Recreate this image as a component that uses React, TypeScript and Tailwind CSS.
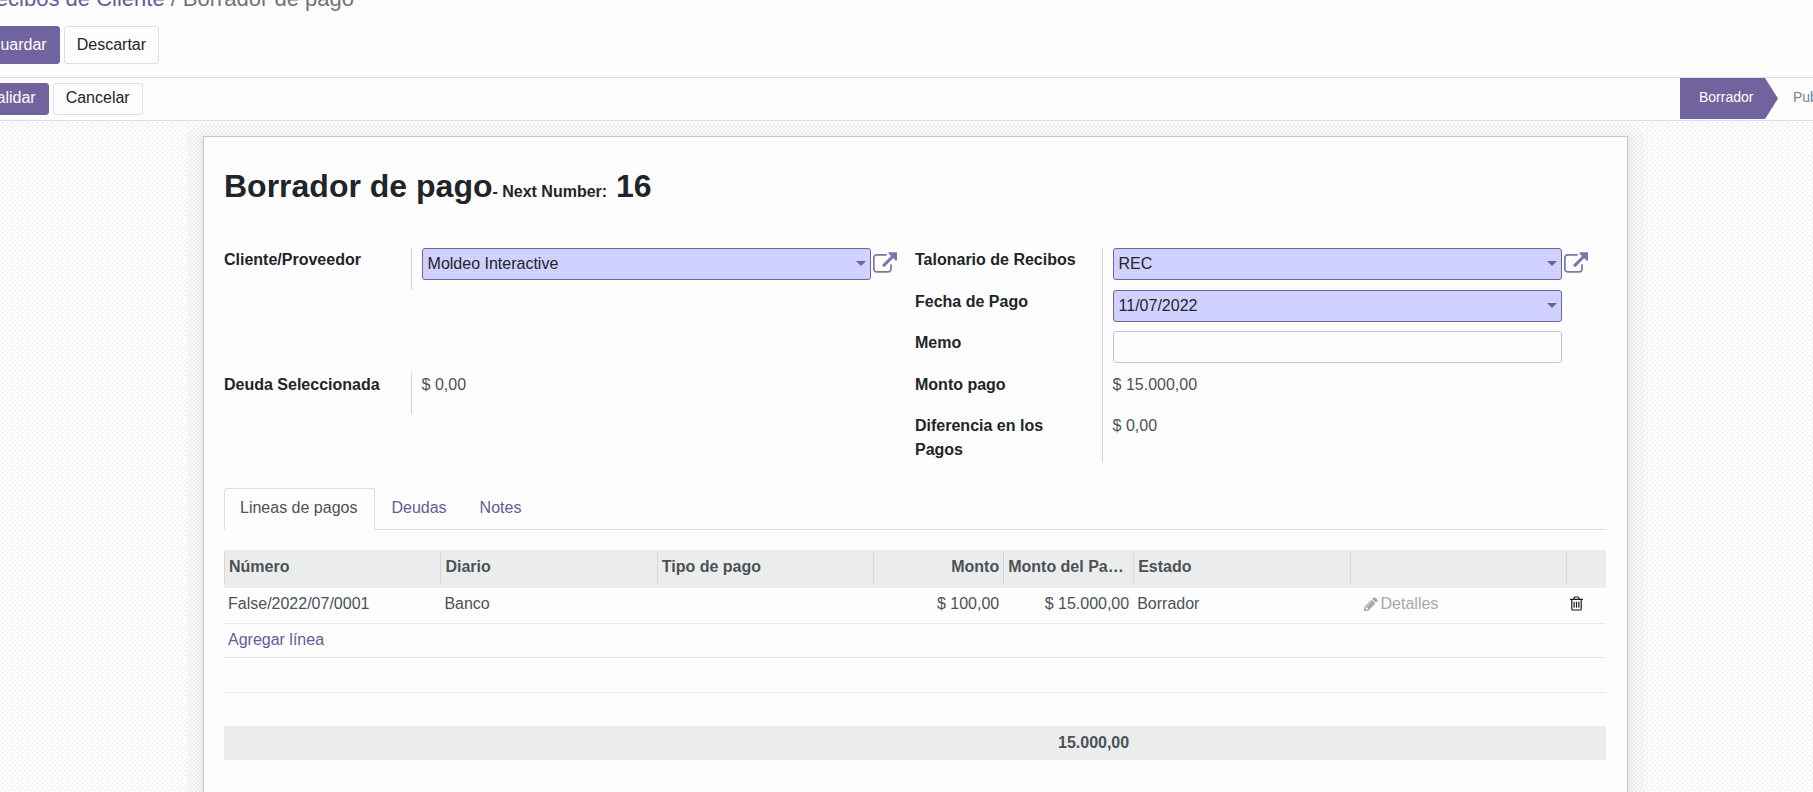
import { ReactNode } from "react";

const tabs = ["Lineas de pagos", "Deudas", "Notes"];

const ExternalLinkIcon = () => (
  <svg viewBox="0 0 1792 1536" className="h-[21px] w-6 fill-[#7c76ab]" aria-hidden="true">
    <path d="M1408 800v320q0 119-84.5 203.5t-203.5 84.5h-832q-119 0-203.5-84.5t-84.5-203.5v-832q0-119 84.5-203.5t203.5-84.5h704q14 0 23 9t9 23v64q0 14-9 23t-23 9h-704q-66 0-113 47t-47 113v832q0 66 47 113t113 47h832q66 0 113-47t47-113v-320q0-14 9-23t23-9h64q14 0 23 9t9 23z" transform="translate(0 128)" />
    <path d="M1792 64v512q0 26-19 45t-45 19-45-19l-176-176-652 652q-10 10-23 10t-23-10l-114-114q-10-10-10-23t10-23l652-652-176-176q-19-19-19-45t19-45 45-19h512q26 0 45 19t19 45z" />
  </svg>
);

const PencilIcon = () => (
  <svg viewBox="128 128 1536 1536" className="size-[14px] fill-current" aria-hidden="true">
    <path d="M491 1536l91-91-235-235-91 91v107h128v128h107zm523-928q0-22-22-22-10 0-17 7l-542 542q-7 7-7 17 0 22 22 22 10 0 17-7l542-542q7-7 7-17zm-54-192l416 416-832 832h-416v-416zm683 96q0 53-37 90l-166 166-416-416 166-165q36-38 90-38 53 0 91 38l235 234q37 39 37 91z" />
  </svg>
);

const TrashIcon = () => (
  <svg viewBox="192 128 1408 1536" className="h-[15px] w-[13px] fill-current" aria-hidden="true">
    <path d="M704 736v576q0 14-9 23t-23 9h-64q-14 0-23-9t-9-23v-576q0-14 9-23t23-9h64q14 0 23 9t9 23zm256 0v576q0 14-9 23t-23 9h-64q-14 0-23-9t-9-23v-576q0-14 9-23t23-9h64q14 0 23 9t9 23zm256 0v576q0 14-9 23t-23 9h-64q-14 0-23-9t-9-23v-576q0-14 9-23t23-9h64q14 0 23 9t9 23zm128 724v-948h-896v948q0 22 7 40.5t14.5 27 10.5 8.5h832q3 0 10.5-8.5t14.5-27 7-40.5zm-672-1076h448l-48-117q-7-9-17-11h-317q-10 2-17 11zm928 32v64q0 14-9 23t-23 9h-96v948q0 83-47 143.5t-113 60.5h-832q-66 0-113-58.5t-47-141.5v-952h-96q-14 0-23-9t-9-23v-64q0-14 9-23t23-9h309l70-167q15-37 54-63t79-26h320q40 0 79 26t54 63l70 167h309q14 0 23 9t9 23z" />
  </svg>
);

const Caret = () => (
  <svg viewBox="0 0 10 5" className="pointer-events-none absolute right-[5px] top-[13px] h-[5px] w-[10px] fill-[#71639e]" aria-hidden="true">
    <path d="M0 0h10L5 5z" />
  </svg>
);

const Label = ({ htmlFor, children, className = "" }: { htmlFor: string; children: ReactNode; className?: string }) => (
  <label htmlFor={htmlFor} className={`pr-4 font-bold ${className}`}>
    {children}
  </label>
);

const Value = ({ children, className = "" }: { children: ReactNode; className?: string }) => (
  <div className={`flex items-start gap-[2px] border-l border-[#d5d5da] pl-[10px] text-[#4c5158] ${className}`}>{children}</div>
);

const SelectField = ({ id, value }: { id: string; value: string }) => (
  <>
    <div className="relative w-[91%]">
      <select
        id={id}
        className="block h-8 w-full appearance-none rounded-[3px] border border-[#71639e] bg-[#d1d1ff] px-[5px] text-[#212529] outline-none"
      >
        <option>{value}</option>
      </select>
      <Caret />
    </div>
    <button type="button" aria-label="Enlace externo" className="mt-1">
      <ExternalLinkIcon />
    </button>
  </>
);

const HeadCell = ({ children, right }: { children?: ReactNode; right?: boolean }) => (
  <th className="px-0 pb-[3px] pt-px font-bold">
    <div className={`h-[34px] truncate border-l border-[#d3d5d6] px-1 py-1 ${right ? "text-right" : "text-left"}`}>{children}</div>
  </th>
);

const App = () => {
  return (
    <div className="flex h-screen flex-col overflow-hidden bg-[#fdfdfd] font-['Liberation_Sans',Arial,sans-serif] text-base text-[#212529]">
      {/* Control panel */}
      <header className="shrink-0 border-b border-[#dcdce2] pb-[13px]">
        <nav className="-ml-5 -mt-[17px] whitespace-nowrap text-[22px] leading-8 text-[#6c757d]">
          <a href="#" className="text-[#665a97]">Recibos de Cliente</a>
          <span className="px-[6px]">/</span>
          <span>Borrador de pago</span>
        </nav>
        <div className="-ml-[25px] mt-[11px] flex gap-1">
          <button type="button" className="h-[38px] rounded-[3px] border border-[#71639e] bg-[#71639e] px-3 text-white">Guardar</button>
          <button type="button" className="h-[38px] rounded-[3px] border border-[#dcdfe3] px-3">Descartar</button>
        </div>
      </header>

      {/* Status bar */}
      <div className="flex h-[43px] shrink-0 items-start border-b border-[#dcdce2]">
        <div className="-ml-[26px] mt-[5px] flex gap-1">
          <button type="button" className="h-8 rounded-[3px] border border-[#71639e] bg-[#71639e] px-3 pb-[2px] text-white">Validar</button>
          <button type="button" className="h-8 rounded-[3px] border border-[#dcdfe3] px-3 pb-[2px]">Cancelar</button>
        </div>
        <div className="ml-auto flex w-[133px] items-start overflow-hidden text-sm leading-[38px]">
          <button type="button" className="h-[41px] w-[98px] shrink-0 bg-[#71639e] pb-[3px] pl-[19px] text-left text-white [clip-path:polygon(0_0,85px_0,100%_50%,85px_100%,0_100%)]">
            Borrador
          </button>
          <button type="button" className="pl-[15px] text-[#7c8186]">Publicado</button>
        </div>
      </div>

      {/* Form */}
      <main className="flex min-h-0 flex-1 flex-col bg-[conic-gradient(at_1px_2px,transparent_75%,#e9ebeb_0),conic-gradient(at_2px_1px,transparent_75%,#e9ebeb_0)] bg-[length:5px_5px] bg-[position:2px_1px,4px_4px] pt-[3px]">
        <div className="ml-[187px] mr-[169px] flex-1 rounded-t-2xl bg-[repeating-conic-gradient(#ebedec_0_25%,#fdfdfd_0_50%)] bg-[length:4px_4px] px-4 pt-3">
          <div className="h-full border border-b-0 border-[#c6c6d0] bg-[#fdfdfd] pl-5 pr-[21px] pt-[29px] shadow-[0_4px_4px_4px_#e9ebeb]">
            <h1 className="text-[32px] font-bold leading-10">
              Borrador de pago<span className="text-base">- Next Number:</span> 16
            </h1>

            <div className="mt-[42px] grid grid-cols-2">
              <div className="grid grid-cols-[27%_1fr] grid-rows-[42px_41px_42px_41px_auto]">
                <Label htmlFor="partner">Cliente/Proveedor</Label>
                <Value>
                  <SelectField id="partner" value="Moldeo Interactive" />
                </Value>
                <Label htmlFor="debt" className="row-start-4">Deuda Seleccionada</Label>
                <Value className="row-start-4">
                  <output id="debt">$ 0,00</output>
                </Value>
              </div>

              <div className="grid grid-cols-[27%_1fr] grid-rows-[42px_41px_42px_41px_auto]">
                <Label htmlFor="book">Talonario de Recibos</Label>
                <Value>
                  <SelectField id="book" value="REC" />
                </Value>
                <Label htmlFor="date">Fecha de Pago</Label>
                <Value>
                  <div className="relative w-[91%]">
                    <input
                      id="date"
                      type="text"
                      defaultValue="11/07/2022"
                      className="block h-8 w-full rounded-[3px] border border-[#71639e] bg-[#d1d1ff] px-[5px] text-[#212529] outline-none"
                    />
                    <Caret />
                  </div>
                </Value>
                <Label htmlFor="memo">Memo</Label>
                <Value>
                  <input id="memo" type="text" className="block h-8 w-[91%] rounded-[3px] border border-[#c6c6d0] px-[5px] outline-none" />
                </Value>
                <Label htmlFor="amount">Monto pago</Label>
                <Value>
                  <output id="amount">$ 15.000,00</output>
                </Value>
                <Label htmlFor="diff">Diferencia en los Pagos</Label>
                <Value>
                  <output id="diff">$ 0,00</output>
                </Value>
              </div>
            </div>

            {/* Tabs */}
            <div role="tablist" className="mt-[26px] flex border-b border-[#dcdce2]">
              {tabs.map((tab, i) => (
                <button
                  key={tab}
                  type="button"
                  role="tab"
                  aria-selected={i === 0}
                  className={
                    i === 0
                      ? "-mb-px rounded-t-[3px] border border-b-0 border-[#dcdce2] bg-[#fdfdfd] pb-[10px] pl-[15px] pr-[17px] pt-[7px] text-[#4c5158]"
                      : "pb-[9px] pl-4 pr-[17px] pt-2 text-[#665a97]"
                  }
                >
                  {tab}
                </button>
              ))}
            </div>

            <table className="mt-5 w-full table-fixed border-collapse text-[#4c5158]">
              <colgroup>
                <col />
                <col />
                <col />
                <col className="w-[130px]" />
                <col className="w-[130px]" />
                <col />
                <col />
                <col className="w-10" />
              </colgroup>
              <thead className="bg-[#ebedec]">
                <tr>
                  <HeadCell>Número</HeadCell>
                  <HeadCell>Diario</HeadCell>
                  <HeadCell>Tipo de pago</HeadCell>
                  <HeadCell right>Monto</HeadCell>
                  <HeadCell>Monto del Pa…</HeadCell>
                  <HeadCell>Estado</HeadCell>
                  <HeadCell />
                  <HeadCell />
                </tr>
              </thead>
              <tbody>
                <tr className="h-[35px] border-b border-[#e9ebeb] align-top">
                  <td className="px-1 pt-1">False/2022/07/0001</td>
                  <td className="px-1 pt-1">Banco</td>
                  <td />
                  <td className="px-1 pt-1 text-right">$ 100,00</td>
                  <td className="px-1 pt-1 text-right">$ 15.000,00</td>
                  <td className="px-1 pt-1">Borrador</td>
                  <td className="pl-[14px] pt-1">
                    <button type="button" className="flex items-center gap-[3px] text-[#a6a8ac]">
                      <PencilIcon />
                      Detalles
                    </button>
                  </td>
                  <td className="pl-1 pt-2">
                    <button type="button" aria-label="Eliminar" className="block text-[#16191c]">
                      <TrashIcon />
                    </button>
                  </td>
                </tr>
                <tr className="h-[34px] border-b border-[#e9ebeb] align-top">
                  <td colSpan={8} className="px-1 pt-1">
                    <a href="#" className="text-[#665a97]">Agregar línea</a>
                  </td>
                </tr>
                <tr className="h-[35px] border-b border-[#e9ebeb]">
                  <td colSpan={8} />
                </tr>
                <tr className="h-[34px]">
                  <td colSpan={8} />
                </tr>
              </tbody>
              <tfoot className="bg-[#ebedec] font-bold">
                <tr className="h-[34px]">
                  <td colSpan={4} />
                  <td className="px-1 text-right">15.000,00</td>
                  <td colSpan={3} />
                </tr>
              </tfoot>
            </table>
          </div>
        </div>
      </main>
    </div>
  );
};

export default App;
